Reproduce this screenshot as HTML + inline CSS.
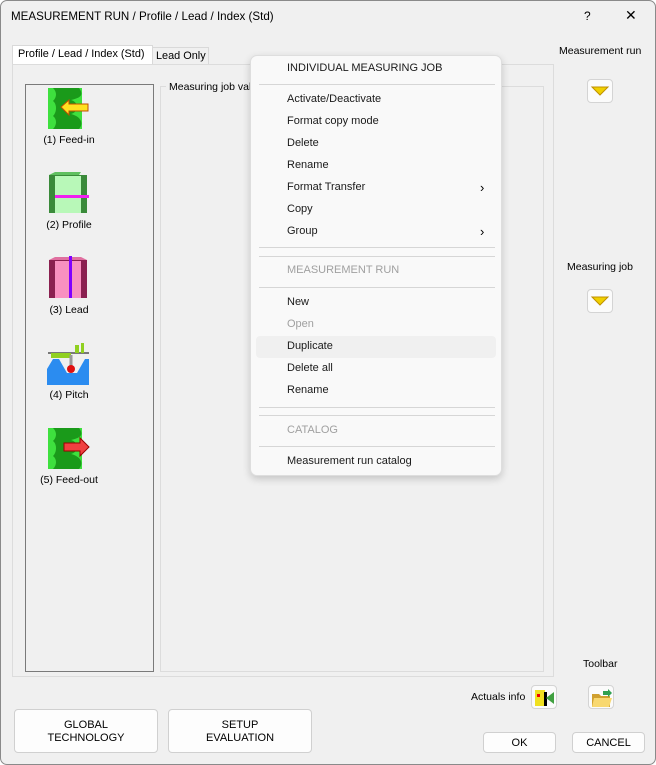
<!DOCTYPE html>
<html><head><style>
*{margin:0;padding:0;box-sizing:border-box}
body{width:656px;height:765px;background:#fff;font-family:"Liberation Sans",sans-serif;font-size:11px;color:#000;position:relative;overflow:hidden}
.a{position:absolute}
.win{left:0;top:0;width:656px;height:765px;background:#f0f0f0;border:1px solid #8a8a8a;border-radius:7px}
.btn{position:absolute;background:#fdfdfd;border:1px solid #d0d0d0;border-radius:4px;text-align:center;font-size:11px;line-height:13px}
.lbl{position:absolute;font-size:10.5px;text-align:center;width:110px}
.menu{left:250px;top:55px;width:252px;height:421px;background:#f9f9f9;border:1px solid #dedede;border-radius:7px;box-shadow:0 3px 8px rgba(0,0,0,.18)}
.mi{position:absolute;left:36px;font-size:11px;color:#1a1a1a}
.g{color:#a0a0a0}
.sep{position:absolute;left:8px;width:236px;height:1px;background:#d6d6d6}
.tri{position:absolute;width:26px;height:24px;background:#fbfbfb;border:1px solid #d4d4d4;border-radius:4px}
</style></head><body>
<div class="a win">
<div class="a" style="left:10px;top:9px;font-size:11.6px">MEASUREMENT RUN / Profile / Lead / Index (Std)</div>
<div class="a" style="left:583px;top:8px;font-size:12px">?</div>
<div class="a" style="left:624px;top:7px;font-size:14px;font-family:'DejaVu Sans',sans-serif;font-weight:300">✕</div>
<!-- tabs -->
<div class="a" style="left:11px;top:44px;width:141px;height:20px;background:#fff;border:1px solid #d9d9d9;border-bottom:none"></div>
<div class="a" style="left:17px;top:47px;font-size:10.9px">Profile / Lead / Index (Std)</div>
<div class="a" style="left:151px;top:46px;width:57px;height:18px;background:#f0f0f0;border:1px solid #d9d9d9;border-bottom:none"></div>
<div class="a" style="left:155px;top:49px;font-size:10.9px">Lead Only</div>
<div class="a" style="left:11px;top:63px;width:542px;height:613px;border:1px solid #dcdcdc;background:#f0f0f0"></div>
<div class="a" style="left:24px;top:83px;width:129px;height:588px;border:1px solid #7a7a7a;background:#f0f0f0"></div>
<div class="a" style="left:159px;top:85px;width:384px;height:586px;border:1px solid #dcdcdc"></div>
<div class="a" style="left:165px;top:80px;font-size:10.5px;background:#f0f0f0;padding:0 3px">Measuring job val</div>
<!-- icons -->
<svg class="a" style="left:46px;top:86px" width="44" height="44"><rect x="1" y="1" width="34" height="41" fill="#3ee03e"/><path d="M6 1h26c6 8 0 10-8 12c8 2 8 12 0 14c8 2 14 8 8 15H6c4-4 4-10 0-13c4-4 4-12 0-15c4-4 4-9 0-13z" fill="#1a9a1a"/><path d="M14 20l8-7v4h19v7H22v4z" fill="#ffe020" stroke="#c05000"/></svg>
<div class="lbl" style="left:13px;top:133px">(1) Feed-in</div>
<svg class="a" style="left:46px;top:170px" width="44" height="44"><path d="M2 4l6-3h26l-2 3z" fill="#60c060"/><rect x="2" y="4" width="38" height="38" fill="#3a8a3a"/><rect x="8" y="5" width="26" height="37" fill="#b8f8b8"/><rect x="8" y="24" width="34" height="3" fill="#f020f0"/></svg>
<div class="lbl" style="left:13px;top:218px">(2) Profile</div>
<svg class="a" style="left:46px;top:255px" width="44" height="44"><path d="M2 4l6-3h26l6 3z" fill="#e070a0"/><rect x="2" y="4" width="38" height="38" fill="#8a2050"/><rect x="8" y="5" width="26" height="37" fill="#f890c0"/><rect x="22" y="0" width="3" height="42" fill="#8000ff"/></svg>
<div class="lbl" style="left:13px;top:303px">(3) Lead</div>
<svg class="a" style="left:46px;top:340px" width="44" height="44"><line x1="1" y1="12" x2="42" y2="12" stroke="#000"/><rect x="28" y="4" width="4" height="8" fill="#90d020"/><rect x="34" y="2" width="3" height="10" fill="#90d020"/><rect x="4" y="12" width="20" height="5" fill="#90d020"/><line x1="24" y1="14" x2="24" y2="25" stroke="#999" stroke-width="3"/><circle cx="24" cy="28" r="4" fill="#e01010"/><path d="M0 44V28l6-10h6l8 14h10l8-14h4v26z" fill="#2b8cf0"/></svg>
<div class="lbl" style="left:13px;top:388px">(4) Pitch</div>
<svg class="a" style="left:46px;top:426px" width="44" height="44"><rect x="1" y="1" width="34" height="41" fill="#3ee03e"/><path d="M6 1h26c6 8 0 10-8 12c8 2 8 12 0 14c8 2 14 8 8 15H6c4-4 4-10 0-13c4-4 4-12 0-15c4-4 4-9 0-13z" fill="#1a9a1a"/><path d="M17 16h16v-5l9 9-9 9v-5H17z" fill="#f04040" stroke="#900"/></svg>
<div class="lbl" style="left:13px;top:473px">(5) Feed-out</div>
<!-- right -->
<div class="a" style="left:558px;top:44px;font-size:10.5px">Measurement run</div>
<div class="tri" style="left:586px;top:78px"><svg width="24" height="22"><path d="M4 7h16l-8 8z" fill="#f0d000" stroke="#c09000"/></svg></div>
<div class="a" style="left:566px;top:260px;font-size:10.5px">Measuring job</div>
<div class="tri" style="left:586px;top:288px"><svg width="24" height="22"><path d="M4 7h16l-8 8z" fill="#f0d000" stroke="#c09000"/></svg></div>
<div class="a" style="left:582px;top:657px;font-size:10.5px">Toolbar</div>
<div class="a" style="left:470px;top:690px;font-size:10.5px">Actuals info</div>
<div class="tri" style="left:530px;top:684px"><svg width="24" height="24"><rect x="3" y="4" width="10" height="16" fill="#f0e020"/><rect x="5" y="8" width="3" height="3" fill="#e00"/><path d="M12 6h3v14h-3z" fill="#000"/><path d="M14 12l8-6v12z" fill="#40a040"/></svg></div>
<div class="tri" style="left:587px;top:684px"><svg width="24" height="24"><path d="M3 8h7l2 2h9v11H3z" fill="#d0a030"/><path d="M5 12h18l-3 9H3z" fill="#f8d870"/><path d="M14 5l5 0 0-2 4 4-4 4 0-2h-5z" fill="#30a050"/></svg></div>
<div class="btn" style="left:13px;top:708px;width:144px;height:44px;padding-top:9px">GLOBAL<br>TECHNOLOGY</div>
<div class="btn" style="left:167px;top:708px;width:144px;height:44px;padding-top:9px">SETUP<br>EVALUATION</div>
<div class="btn" style="left:482px;top:731px;width:73px;height:21px;padding-top:4px">OK</div>
<div class="btn" style="left:571px;top:731px;width:73px;height:21px;padding-top:4px">CANCEL</div>
</div>
<!-- menu -->
<div class="a menu">
<div class="mi" style="top:6px">INDIVIDUAL MEASURING JOB</div>
<div class="sep" style="top:28px"></div>
<div class="mi" style="top:37px">Activate/Deactivate</div>
<div class="mi" style="top:59px">Format copy mode</div>
<div class="mi" style="top:81px">Delete</div>
<div class="mi" style="top:103px">Rename</div>
<div class="mi" style="top:125px">Format Transfer</div><div class="a" style="left:229px;top:124px;font-size:13px">›</div>
<div class="mi" style="top:147px">Copy</div>
<div class="mi" style="top:169px">Group</div><div class="a" style="left:229px;top:168px;font-size:13px">›</div>
<div class="sep" style="top:191px"></div>
<div class="sep" style="top:200px"></div>
<div class="mi g" style="top:208px">MEASUREMENT RUN</div>
<div class="sep" style="top:231px"></div>
<div class="mi" style="top:240px">New</div>
<div class="mi g" style="top:262px">Open</div>
<div class="a" style="left:5px;top:280px;width:240px;height:22px;background:#f0f0f0;border-radius:4px"></div>
<div class="mi" style="top:284px">Duplicate</div>
<div class="mi" style="top:306px">Delete all</div>
<div class="mi" style="top:328px">Rename</div>
<div class="sep" style="top:351px"></div>
<div class="sep" style="top:359px"></div>
<div class="mi g" style="top:368px">CATALOG</div>
<div class="sep" style="top:390px"></div>
<div class="mi" style="top:399px">Measurement run catalog</div>
</div>
</body></html>
